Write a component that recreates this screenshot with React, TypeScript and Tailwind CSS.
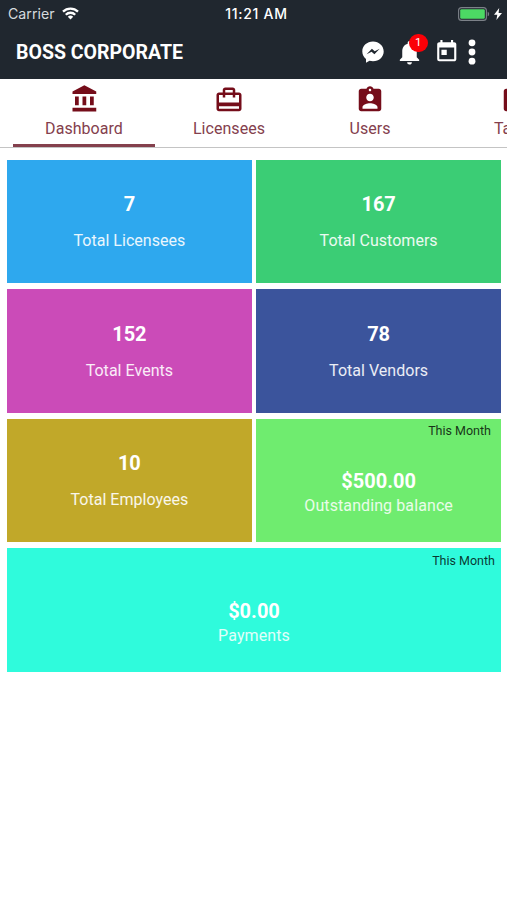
import * as React from "react";
import { MdAssignment, MdAssignmentInd, MdCardTravel, MdNotifications, MdToday } from "react-icons/md";

const TABS = [
  { label: "Dashboard", Icon: BankIcon, width: "w-[142px]", active: true },
  { label: "Licensees", Icon: MdCardTravel, width: "w-[148px]" },
  { label: "Users", Icon: MdAssignmentInd, width: "w-[134px]" },
  { label: "Tasks", Icon: MdAssignment, width: "w-[156px]" },
];

const STATS = [
  { value: "7", label: "Total Licensees", bg: "bg-[#2ea8ee]" },
  { value: "167", label: "Total Customers", bg: "bg-[#3bcd75]" },
  { value: "152", label: "Total Events", bg: "bg-[#cb4bb8]" },
  { value: "78", label: "Total Vendors", bg: "bg-[#3b549c]" },
  { value: "10", label: "Total Employees", bg: "bg-[#c1a829]" },
];

export default function App() {
  return (
    <div className="h-[900px] w-[507px] overflow-hidden bg-white font-['Roboto',sans-serif]">
      <header className="h-[79px] bg-[#20272f] text-white">
        <StatusBar />
        <AppBar />
      </header>
      <TabBar />
      <main className="grid grid-cols-2 gap-x-[4.5px] gap-y-[6px] pt-[11.5px] pr-[6px] pl-[7px]">
        {STATS.map((s) => (
          <StatCard key={s.label} {...s} />
        ))}
        <MoneyCard value="$500.00" label="Outstanding balance" className="bg-[#6fec6f] pr-[10px] pl-[10px]" />
        <MoneyCard value="$0.00" label="Payments" className="col-span-2 bg-[#2ffbdc] pr-[6px] pl-[6px]" />
      </main>
    </div>
  );
}

function StatusBar() {
  return (
    <div className="grid h-[27px] grid-cols-3 items-center pr-[5px] pl-[8px] font-['Inter',sans-serif]">
      <div className="flex items-center gap-[7px]">
        <span className="text-[14.2px] text-[#d5dade]">Carrier</span>
        <svg width="17" height="13" viewBox="0 0 17 13" fill="none" stroke="#fff" strokeWidth="2.3">
          <path d="M1 4.6a10.7 10.7 0 0 1 15 0" />
          <path d="M3.8 7.7a6.7 6.7 0 0 1 9.4 0" />
          <path d="M8.5 12.4 5.8 9.7a3.9 3.9 0 0 1 5.4 0z" fill="#fff" stroke="none" />
        </svg>
      </div>
      <span className="pl-[3px] text-center text-[14px] font-medium tracking-[0.7px] whitespace-nowrap">11:21 AM</span>
      <div className="flex items-center justify-end gap-[4px]">
        <svg width="32" height="14" viewBox="0 0 32 14">
          <rect x="0.6" y="0.6" width="27.8" height="12.8" rx="3" fill="none" stroke="#7c8188" strokeWidth="1.1" />
          <rect x="2.2" y="2.2" width="24.6" height="9.6" rx="1.4" fill="#4cd964" />
          <path d="M29.7 4.7c1.9.6 1.9 4 0 4.6z" fill="#7c8188" />
        </svg>
        <svg width="8" height="12" viewBox="0 0 8 12" fill="#fff">
          <path d="M5.2 0 0 6.8h3.3L2.4 12 8 4.9H4.6z" />
        </svg>
      </div>
    </div>
  );
}

function AppBar() {
  return (
    <div className="flex h-[50px] items-center pl-[16px]">
      <h1 className="w-[345.5px] pt-px text-[19.5px] font-bold whitespace-nowrap">BOSS CORPORATE</h1>
      <MessengerIcon />
      <div className="relative ml-[11px]">
        <MdNotifications size={29} />
        <span className="absolute -top-[4px] right-[-4px] flex h-[18.5px] w-[18.5px] items-center justify-center rounded-full bg-[#fb0007] text-[11.5px]">
          1
        </span>
      </div>
      <MdToday size={25.5} className="ml-[10px]" />
      <svg width="8" height="26" viewBox="0 0 8 26" fill="#fff" className="ml-[9px]">
        <circle cx="4" cy="3.8" r="3.4" />
        <circle cx="4" cy="13" r="3.4" />
        <circle cx="4" cy="22.2" r="3.4" />
      </svg>
    </div>
  );
}

function MessengerIcon() {
  return (
    <svg width="22" height="22" viewBox="0 0 22 22">
      <path
        d="M11 .6C5 .6.3 4.9.3 10.5c0 3.100 1.500 5.800 3.700 7.600v3.600l3.500-1.900c1.100.3 2.300.5 3.500.5 6 0 10.700-4.300 10.700-9.800S17 .6 11 .6z"
        fill="#fff"
      />
      <path d="M4.600 13.300 9.900 7.800l2.800 2.500 5-2.500-5.300 5.500-2.800-2.500z" fill="#20272f" />
    </svg>
  );
}

function BankIcon({ size, className }: { size: number; className: string }) {
  return (
    <svg width={size} height={size} viewBox="0 0 24 24" fill="currentColor" className={className}>
      <path d="M4 10v7h3v-7H4zm6 0v7h3v-7h-3zM2 22h19v-3H2v3zm14-12v7h3v-7h-3zM11.500 1 2 6v2h19V6l-9.500-5z" />
    </svg>
  );
}

function TabBar() {
  return (
    <nav className="flex h-[69px] overflow-hidden border-b-[1.5px] border-[#c4c4c4] pl-[13px]">
      {TABS.map(({ label, Icon, width, active }) => (
        <div key={label} className={`flex shrink-0 flex-col items-center ${active ? "pt-[5px]" : "pt-[6px]"} ${width}`}>
          <Icon size={30} className={active ? "ml-px text-[#750d1a]" : "text-[#750d1a]"} />
          <span
            className={`text-[16px] leading-[24px] tracking-[0.05px] text-[#84404d] ${active ? "mt-[3px]" : "mt-[2px]"}`}
          >
            {label}
          </span>
          {active && <div className="mt-[3px] h-[2.5px] w-full bg-[#84404d]" />}
        </div>
      ))}
    </nav>
  );
}

function StatCard({ value, label, bg }: { value: string; label: string; bg: string }) {
  return (
    <div className={`flex h-[123.5px] flex-col items-center pt-[31.5px] text-white ${bg}`}>
      <div className="text-[20px] leading-[26px] font-bold">{value}</div>
      <div className="mt-[12px] text-[16px] leading-[24px] tracking-[0.03px] text-white/90">{label}</div>
    </div>
  );
}

function MoneyCard({ value, label, className }: { value: string; label: string; className: string }) {
  return (
    <div className={`flex h-[123.5px] flex-col items-center pt-[3.5px] text-white ${className}`}>
      <div className="self-end text-[12.5px] leading-[18px] text-black/80">This Month</div>
      <div className="mt-[28px] text-[20px] leading-[26px] font-bold">{value}</div>
      <div className="text-[16px] leading-[24px] tracking-[0.1px] text-white/85">{label}</div>
    </div>
  );
}
